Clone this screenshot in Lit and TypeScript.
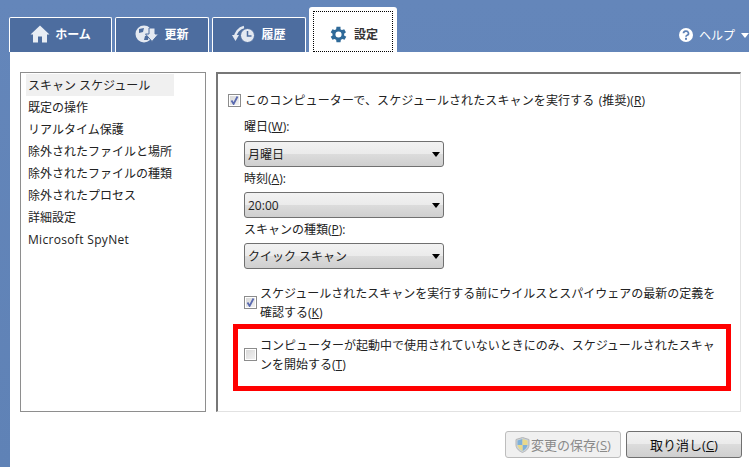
import { LitElement, html, css } from "lit";
import { customElement } from "lit/decorators.js";

const items = ["スキャン スケジュール","既定の操作","リアルタイム保護","除外されたファイルと場所","除外されたファイルの種類","除外されたプロセス","詳細設定","Microsoft SpyNet"];

@customElement("app-root")
export class AppRoot extends LitElement {
  static styles = css`
    :host { display:block; width:749px; height:467px; overflow:hidden; font-family:"Open Sans","Noto Sans CJK JP",sans-serif; font-size:12px; color:#222; }
    * { box-sizing:border-box; }
    .root { position:relative; width:749px; height:467px; background:linear-gradient(#6486ba,#5f82b6); display:flex; flex-direction:column; }
    .head { height:52px; display:flex; align-items:flex-end; padding-left:9px; gap:3px; flex:none; }
    .tab { height:35px; background:#4d6d9f; border:1px solid #fff; border-bottom:0; border-radius:2px 2px 0 0; color:#fff; font-weight:700; display:flex; align-items:center; justify-content:center; gap:5px; padding-bottom:2px; }
    .t1 { width:103px; } .t2 { width:94px; } .t3 { width:94px; }
    .t4 { width:88px; height:45px; background:#fff; border:0; color:#333; padding:4px 4px 0; border-radius:3px 3px 0 0; }
    .focus { width:100%; height:100%; border:1px dotted #000; display:flex; align-items:center; justify-content:center; gap:5px; padding-top:5px; }
    .help { margin-left:auto; height:34px; display:flex; align-items:center; gap:6px; color:#fff; }
    .caret { width:0; height:0; border:4px solid transparent; border-top:5px solid #fff; border-bottom:0; }
    .main { flex:1; margin-left:10px; background:#fff; padding:20px 8px 0 10px; display:flex; flex-direction:column; }
    .cols { display:flex; gap:10px; height:340px; }
    .list { width:186px; border:1px solid #8e8e8e; padding:1px 5px; }
    .li { height:22px; line-height:23px; padding-left:2px; width:148px; white-space:nowrap; }
    .li.sel { background:#f0f0f0; }
    .li.lat { letter-spacing:.32px; }
    .panel { flex:1; border:1px solid #e2e2e2; border-left:2px solid #777; border-top:2px solid #777; padding:17px 0 0 10px; }
    .chk { display:flex; align-items:center; gap:4px; line-height:19px; }
    .chk span:last-child { letter-spacing:.12px; word-spacing:1px; }
    .box { width:13px; height:13px; flex:none; background:linear-gradient(135deg,#d6d6d6,#f4f4f4); border:1px solid #8c8c8c; outline:1px solid #fff; outline-offset:-2px; display:flex; align-items:center; justify-content:center; }
    .box svg { display:block; }
    .label { height:17px; line-height:19px; margin:2px 0 0 16px; }
    .label.first { margin-top:7px; height:18px; }
    .sel-b { width:200px; height:26px; margin:6px 0 0 16px; border:1px solid #707070; border-radius:3px; background:linear-gradient(#f2f2f2 0,#ebebeb 48%,#dcdcdc 50%,#cfcfcf 100%); display:flex; align-items:center; justify-content:space-between; padding:0 3px 0 3px; }
    .sel-b .arr { width:0; height:0; border:4px solid transparent; border-top:5px solid #000; border-bottom:0; }
    .opt { display:flex; align-items:center; gap:3px; margin:14px 0 0 16px; line-height:19px; width:480px; }
    .opt .txt { padding-top:1px; }
    .opt .box { margin-bottom:1px; }
    .opt + .opt { margin-top:13px; }
    u { text-underline-offset:1px; }
    .red { position:absolute; left:233px; top:324px; width:498px; height:67px; border:5px solid #f00; pointer-events:none; }
    .foot { display:flex; justify-content:flex-end; gap:5px; padding-top:19px; margin-right:-1px; }
    .btn { width:116px; height:27px; border-radius:3px; display:flex; align-items:center; justify-content:center; font-size:13px; }
    .save { border:1px solid #bdbdbd; background:#f0f0f0; color:#8a8a8a; gap:1px; }
    .cancel { border:1px solid #707070; background:linear-gradient(#f2f2f2 0,#ebebeb 48%,#dcdcdc 50%,#cfcfcf 100%); color:#111; }
  `;

  check(on: boolean) {
    return html`<span class="box">${on ? html`<svg width="11" height="11" viewBox="0 0 11 11"><path d="M2.5 5.5 L4.6 9 L8.5 1.5" fill="none" stroke="#5a6ab0" stroke-width="1.800"/></svg>` : ""}</span>`;
  }

  render() {
    return html`<div class="root">
      <div class="head">
        <div class="tab t1">
          <svg width="20" height="18" viewBox="0 0 20 18"><path d="M10 0.5 L19.5 9.5 L17 9.5 L17 17.5 L12 17.5 L12 11.5 L8 11.5 L8 17.5 L3 17.5 L3 9.5 L0.5 9.5 Z" fill="#e8edf4"/></svg>
          <span>ホーム</span>
        </div>
        <div class="tab t2">
          <svg width="24" height="18" viewBox="0 0 24 18"><circle cx="9" cy="9" r="8.5" fill="#e4e9f1"/><path d="M4 4 L9 3 L8 7 L4 8 Z M10 11 L14 10 L13 15 L9 15 Z" fill="#4d6d9f"/><path d="M14 3 H20 V9 H23.5 L17 16.5 L10.5 9 H14 Z" fill="#e4e9f1" stroke="#4d6d9f"/></svg>
          <span>更新</span>
        </div>
        <div class="tab t3">
          <svg width="24" height="18" viewBox="0 0 24 18"><path d="M3 13 C3 8 7 3 12 2" fill="none" stroke="#e4e9f1" stroke-width="2.5"/><path d="M0 10 L7 10 L3.500 16 Z" fill="#e4e9f1"/><circle cx="15.500" cy="10.500" r="7" fill="#e4e9f1" stroke="#4d6d9f"/><path d="M15.500 6 V11 H19.500" fill="none" stroke="#4d6d9f" stroke-width="1.500"/></svg>
          <span>履歴</span>
        </div>
        <div class="tab t4"><div class="focus">
          <svg width="21" height="21" viewBox="0 0 24 24"><path fill="#2f6a99" d="M19.4 13a7.5 7.5 0 0 0 0-2l2.100-1.600-2-3.500-2.500 1a7.500 7.500 0 0 0-1.700-1L15.300 3.200h-4.600l-.4 2.700a7.500 7.500 0 0 0-1.700 1l-2.500-1-2 3.500L6.200 11a7.500 7.500 0 0 0 0 2l-2.100 1.600 2 3.500 2.500-1a7.500 7.500 0 0 0 1.700 1l.4 2.700h4.600l.4-2.700a7.500 7.500 0 0 0 1.700-1l2.500 1 2-3.500zM13 15.500a3.500 3.500 0 1 1 0-7 3.500 3.500 0 0 1 0 7z" transform="translate(-1 0)"/></svg>
          <span>設定</span>
        </div></div>
        <div class="help">
          <svg width="14" height="14" viewBox="0 0 14 14"><circle cx="7" cy="7" r="7" fill="#fff"/><path d="M4.500 5.300a2.500 2.200 0 1 1 3.600 2c-.8.4-1.100.8-1.100 1.500" fill="none" stroke="#5f82b6" stroke-width="1.700"/><rect x="6" y="9.800" width="2" height="2" fill="#5f82b6"/></svg>
          <span>ヘルプ</span><span class="caret"></span>
        </div>
      </div>
      <div class="main">
        <div class="cols">
          <div class="list">${items.map((t, i) => html`<div class="li ${i === 0 ? "sel" : ""} ${i === 7 ? "lat" : ""}">${t}</div>`)}</div>
          <div class="panel">
            <div class="chk">${this.check(true)}<span>このコンピューターで、スケジュールされたスキャンを実行する (推奨)(<u>R</u>)</span></div>
            <div class="label first">曜日(<u>W</u>):</div>
            <div class="sel-b"><span>月曜日</span><span class="arr"></span></div>
            <div class="label">時刻(<u>A</u>):</div>
            <div class="sel-b"><span>20:00</span><span class="arr"></span></div>
            <div class="label">スキャンの種類(<u>P</u>):</div>
            <div class="sel-b"><span>クイック スキャン</span><span class="arr"></span></div>
            <div class="opt">${this.check(true)}<span class="txt">スケジュールされたスキャンを実行する前にウイルスとスパイウェアの最新の定義を確認する(<u>K</u>)</span></div>
            <div class="opt">${this.check(false)}<span class="txt">コンピューターが起動中で使用されていないときにのみ、スケジュールされたスキャンを開始する(<u>T</u>)</span></div>
          </div>
        </div>
        <div class="foot">
          <div class="btn save">
            <svg width="15" height="16" viewBox="0 0 15 16"><path d="M7.500 0.500 L14 2.500 V8 C14 12 10 14.500 7.500 15.500 C5 14.500 1 12 1 8 V2.500 Z" fill="#c9d3dc" stroke="#b5b5b5"/><path d="M7.500 2 V8 H2.500 V3.500 Z" fill="#7fb0d8"/><path d="M7.500 8 H12.500 C12 11 9.500 13 7.500 14 Z" fill="#7fb0d8"/><path d="M7.500 2 L12.500 3.500 V8 H7.500 Z M7.500 8 V14 C5.500 13 3 11 2.500 8 Z" fill="#e9d98a"/></svg>
            <span>変更の保存(<u>S</u>)</span>
          </div>
          <div class="btn cancel"><span>取り消し(<u>C</u>)</span></div>
        </div>
      </div>
      <div class="red"></div>
    </div>`;
  }
}
